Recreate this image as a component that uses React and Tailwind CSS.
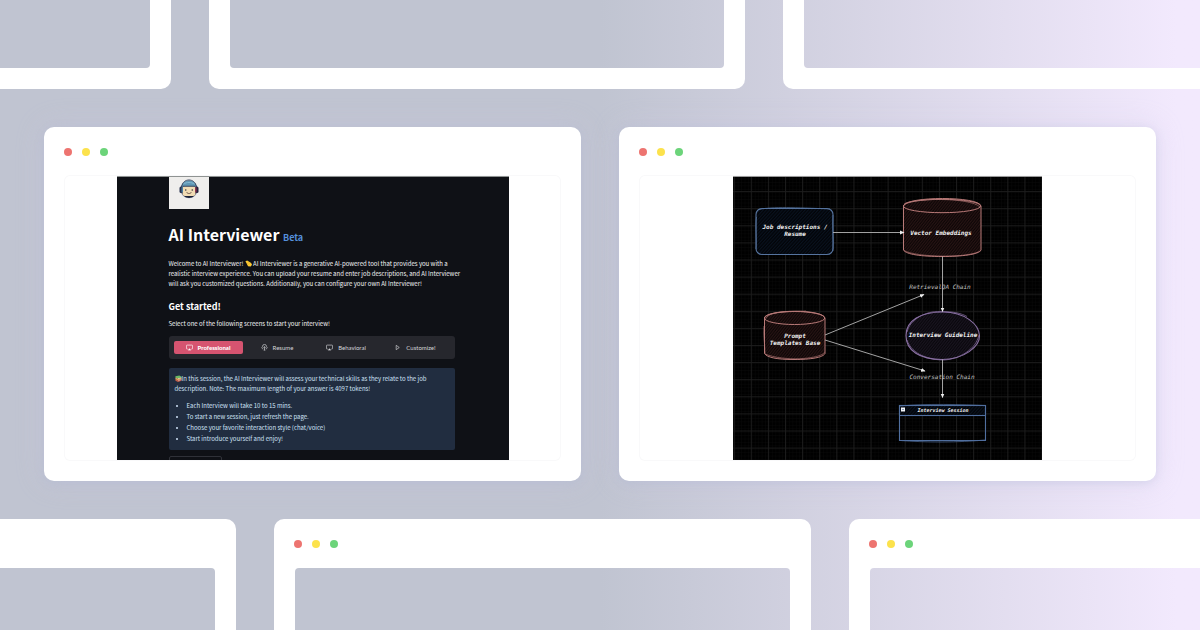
import React, { useState } from 'react'

const TABS = [
  { id: 'professional', label: 'Professional', icon: 'cast' },
  { id: 'resume', label: 'Resume', icon: 'cloud' },
  { id: 'behavioral', label: 'Behavioral', icon: 'cast' },
  { id: 'customize', label: 'Customize!', icon: 'play' },
]

const NOTES = [
  'Each Interview will take 10 to 15 mins.',
  'To start a new session, just refresh the page.',
  'Choose your favorite interaction style (chat/voice)',
  'Start introduce yourself and enjoy!',
]

function Dots() {
  return (
    <div className="relative z-10 flex h-[49px] items-center gap-2.5 pl-5">
      <span className="h-2 w-2 rounded-full bg-[#ed7470]" />
      <span className="h-2 w-2 rounded-full bg-[#fce24c]" />
      <span className="h-2 w-2 rounded-full bg-[#6cd47a]" />
    </div>
  )
}

// Empty frame: the pane's spread shadow paints the white chrome around it
function GhostWindow() {
  return (
    <div className="min-w-0 flex-1 overflow-hidden rounded-[10px]">
      <Dots />
      <div className="px-[21px] pb-[21px]">
        <div className="h-[284px] rounded-[4px] shadow-[0_0_0_64px_#fff]" />
      </div>
    </div>
  )
}

function Window({ children }) {
  return (
    <div className="min-w-0 flex-1 rounded-[10px] bg-white shadow-[0_2px_10px_rgba(165,178,208,0.3),0_0_28px_rgba(205,200,232,0.3)]">
      <Dots />
      <div className="px-[21px] pb-[21px]">
        <div className="flex h-[284px] justify-center overflow-hidden rounded-[5px] ring-1 ring-[#f9f9fa]">
          {children}
        </div>
      </div>
    </div>
  )
}

function Robot() {
  return (
    <svg viewBox="0 0 40 40" className="h-5 w-5" aria-hidden="true">
      <ellipse cx="20" cy="21" rx="18" ry="18" fill="#c9cfdd" />
      <path d="M4 20a16 16 0 0 1 32 0v3a16 15 0 0 1-32 0z" fill="#1c2238" />
      <path d="M5 17C6 7 12 3 20 3s14 4 15 14z" fill="#5f97b5" />
      <path d="M5 16C7 6 13 2 20 2s13 4 15 14" fill="none" stroke="#3b4963" strokeWidth="2" />
      <path d="M9 10c6-4 16-4 22 0" fill="none" stroke="#86b7cf" strokeWidth="2" />
      <rect x="7" y="14" width="26" height="20" rx="5" fill="#f1dcb4" />
      <path d="M7 14.500h26" stroke="#344059" strokeWidth="2" />
      <circle cx="13.500" cy="22" r="1.500" fill="#2a2a38" />
      <circle cx="26.500" cy="22" r="1.500" fill="#2a2a38" />
      <path d="M15 26c2 4 8 4 10 0" fill="none" stroke="#4d3a35" strokeWidth="1.500" />
      <rect x="1" y="15" width="6" height="13" rx="3" fill="#27314f" />
      <rect x="5" y="16" width="3" height="11" rx="1.500" fill="#4b7ea0" />
      <rect x="33" y="15" width="6" height="13" rx="3" fill="#27213c" />
      <rect x="32" y="16" width="3" height="11" rx="1.500" fill="#8d3450" />
    </svg>
  )
}

function Clap() {
  return (
    <svg viewBox="0 0 16 16" className="inline h-[7px] w-[7px] align-[-1px]" aria-hidden="true">
      <path d="M1 3l4-2 9 6 2 4-3 4-6-1z" fill="#ffcb32" />
      <path d="M4 6l5 5M7 4l5 5" stroke="#d99a22" strokeWidth="1" />
    </svg>
  )
}

function Books() {
  return (
    <svg viewBox="0 0 16 16" className="inline h-[7px] w-[7px] align-[-1px]" aria-hidden="true">
      <path d="M1 3l9-2 5 3v2l-8 2-6-2z" fill="#6cb865" />
      <path d="M1 6l6 2 8-2v4l-8 2-6-2z" fill="#e3a35c" />
      <path d="M1 10l6 2 8-2v3l-8 3-6-3z" fill="#c25d49" />
      <path d="M7 7.500l8-2v1L7 9zM7 12l8-2v1l-8 2z" fill="#efe9dc" />
    </svg>
  )
}

function TabIcon({ name }) {
  if (name === 'cloud') {
    return (
      <svg viewBox="0 0 16 16" className="h-[7px] w-[7px]" fill="none" stroke="currentColor" strokeWidth="1.500" aria-hidden="true">
        <path d="M5 11H4a3 3 0 0 1-.5-5.500a4.500 4.500 0 0 1 9 0A3 3 0 0 1 12 11h-1" />
        <path d="M8 14V6M5.500 8.500L8 6l2.500 2.500M6 14h4" />
      </svg>
    )
  }
  if (name === 'play') {
    return (
      <svg viewBox="0 0 16 16" className="h-[7px] w-[7px]" fill="none" stroke="currentColor" strokeWidth="1.500" strokeLinejoin="round" aria-hidden="true">
        <path d="M5 3l7 5-7 5z" />
      </svg>
    )
  }
  return (
    <svg viewBox="0 0 16 16" className="h-[7px] w-[7px]" fill="none" stroke="currentColor" strokeWidth="1.500" aria-hidden="true">
      <path d="M4 11.500H2.500A1.500 1.500 0 0 1 1 10V4a1.500 1.500 0 0 1 1.500-1.500h11A1.500 1.500 0 0 1 15 4v6a1.500 1.500 0 0 1-1.500 1.500H12" />
      <path d="M8 10l3.500 4h-7z" fill="currentColor" strokeWidth="0.500" />
    </svg>
  )
}

function InterviewerScreen() {
  const [tab, setTab] = useState('professional')

  return (
    <div className="w-[392px] overflow-hidden border-t border-[#8f9392] bg-[#0f1116] pr-[54px] pl-[52px] font-['Noto_Sans_CJK_SC',sans-serif] text-[6px] leading-[10px] font-normal text-[#f2f3f5]">
      <div className="flex h-8 w-10 justify-center bg-[#efeeec] pt-0.5">
        <Robot />
      </div>
      <h1 className="mt-[13px] h-6 text-[16px] leading-6 font-bold whitespace-nowrap text-white">
        AI Interviewer <span className="text-[9px] leading-3 text-[#5590dc]">Beta</span>
      </h1>
      <p className="mt-[13px] whitespace-nowrap">
        Welcome to AI Interviewer! <Clap /> AI Interviewer is a generative AI-powered tool that provides you with a
        <br />
        realistic interview experience. You can upload your resume and enter job descriptions, and AI Interviewer
        <br />
        will ask you customized questions. Additionally, you can configure your own AI Interviewer!
      </p>
      <h2 className="mt-3 text-[9px] leading-3 font-bold text-white">Get started!</h2>
      <p className="mt-1.5">Select one of the following screens to start your interview!</p>

      <div className="mt-[7px] grid grid-cols-4 rounded-[3px] bg-[#26272d] p-[5px] font-['Lato',sans-serif]">
        {TABS.map((t) => (
          <button
            key={t.id}
            type="button"
            onClick={() => setTab(t.id)}
            className={`flex h-[13px] items-center justify-center gap-[5px] rounded-[2px] whitespace-nowrap ${
              tab === t.id ? 'bg-[#d65470] font-black text-white' : 'font-normal text-[#d5d6d9]'
            }`}
          >
            <TabIcon name={t.icon} />
            {t.label}
          </button>
        ))}
      </div>

      <div className="mt-[9px] rounded-[2px] bg-[#212d40] px-1.5 py-1.5 text-[#cfe2f6]">
        <p className="whitespace-nowrap">
          <Books />In this session, the AI Interviewer will assess your technical skills as they relate to the job
          <br />
          description. Note: The maximum length of your answer is 4097 tokens!
        </p>
        <ul className="mt-1.5 list-disc pl-3 leading-[11px]">
          {NOTES.map((note) => (
            <li key={note}>{note}</li>
          ))}
        </ul>
      </div>
      <button type="button" aria-label="More" className="mt-1.5 block h-4 w-[53px] rounded-[2px] border border-[#2f3138]" />
    </div>
  )
}

function Arrow({ d }) {
  return <path d={d} fill="none" stroke="#b4b4b4" strokeWidth="0.9" markerEnd="url(#head)" />
}

function DiagramScreen() {
  return (
    <div className="w-[309px] border-t border-[#9a9a9a] bg-black">
      <svg
        viewBox="-1 0 309 284"
        className="h-[284px] w-[309px] font-['DejaVu_Sans_Mono',monospace] text-[6px] font-bold italic"
        role="img"
        aria-label="Interview flow"
      >
        <defs>
          <pattern id="minor" width="3.420" height="3.420" patternUnits="userSpaceOnUse" x="0.300" y="-1.800">
            <path d="M0 0H3.420M0 0V3.420" stroke="#0b0b0b" strokeWidth="0.700" />
          </pattern>
          <pattern id="major" width="17.100" height="17.100" patternUnits="userSpaceOnUse" x="-0.300" y="-3">
            <path d="M0 .5H17.100M.5 0V17.100" stroke="#1d1d1d" strokeWidth="0.900" />
          </pattern>
          <pattern id="blueHatch" width="2.400" height="2.400" patternUnits="userSpaceOnUse" patternTransform="rotate(42)">
            <rect width="2.400" height="2.400" fill="#020408" />
            <path d="M.6 0V2.400" stroke="#0b1626" strokeWidth="0.800" />
          </pattern>
          <pattern id="redHatch" width="2.200" height="2.200" patternUnits="userSpaceOnUse" patternTransform="rotate(38)">
            <rect width="2.200" height="2.200" fill="#0d0606" />
            <path d="M.6 0V2.200" stroke="#301919" strokeWidth="0.800" />
          </pattern>
          <pattern id="purpleHatch" width="2.200" height="2.200" patternUnits="userSpaceOnUse" patternTransform="rotate(38)">
            <rect width="2.200" height="2.200" fill="#09070c" />
            <path d="M.6 0V2.200" stroke="#1f1826" strokeWidth="0.800" />
          </pattern>
          <marker id="head" markerUnits="userSpaceOnUse" markerWidth="5" markerHeight="5" refX="4" refY="2.500" orient="auto">
            <path d="M0 .5L4.500 2.500L0 4.500z" fill="#eee" />
          </marker>
        </defs>
        <rect x="-1" width="310" height="284" fill="url(#minor)" />
        <rect x="-1" width="310" height="284" fill="url(#major)" />

        <g stroke="#56749f" strokeWidth="1.100" fill="none">
          <rect x="22" y="31.500" width="77" height="46" rx="6" fill="url(#blueHatch)" />
          <path d="M24 32.500C40 29.500 60 30.500 96 32M22.500 40C21 50 23 64 22 72M99 38C98 50 100 62 99 74" strokeWidth="0.700" />
        </g>

        <g stroke="#b97a78" strokeWidth="1" fill="none">
          <path d="M169.500 29V73C172 77.500 188 79.500 208 79.500S245 77.500 247 73V29C245 19 172 19 169.500 29z" fill="url(#redHatch)" />
          <ellipse cx="208" cy="29" rx="38.700" ry="6.700" />
          <path d="M170 27C178 21 236 20 246 30M170 73.500C182 80.500 236 81.500 247 73.500" strokeWidth="0.600" />
          <path d="M30.500 141V176.500C33 180.500 43 182.500 60 182.500S89 180.500 91 176.500V141C89 132 33 132 30.500 141z" fill="url(#redHatch)" />
          <ellipse cx="60.500" cy="141" rx="30.200" ry="6.500" />
          <path d="M31 143C34 133 58 135 72 134M30 149C29 159 31 167 31 177C50 184.500 84 182.500 91 175.500" strokeWidth="0.600" />
        </g>

        <g stroke="#8a70a4" strokeWidth="1.100" fill="none">
          <path d="M172 158.500C172 143 187 135 209 135S245 147.500 245.500 158.500S230 182.500 208 182.500S172 174 172 158.500z" fill="url(#purpleHatch)" />
          <path d="M173 155C176 142 192 134 206 134.500C220 134.500 228 136.500 233 139.500M173 163C178 178 196 183 210 183C226 182 242 172 245 158" strokeWidth="0.700" />
        </g>

        <g stroke="#506f9f" strokeWidth="1.100" fill="none">
          <rect x="165.500" y="228.500" width="86" height="10" fill="url(#blueHatch)" />
          <path d="M165.500 228.500H251.500V263.500H165.500z" />
          <path d="M166 229C190 226.500 230 227.500 251 228.500M166 263.500C190 265.500 226 265.500 251 263" strokeWidth="0.700" />
        </g>
        <rect x="167" y="230.500" width="4" height="4" fill="#f2f4f8" />
        <path d="M168 232.500h2" stroke="#55709c" strokeWidth="0.600" />

        <g fill="#f1f1f1" textAnchor="middle">
          <text x="61" y="52">Job descriptions /</text>
          <text x="61" y="59">Resume</text>
          <text x="207" y="58">Vector Embeddings</text>
          <text x="61" y="161">Prompt</text>
          <text x="61" y="168">Templates Base</text>
          <text x="209" y="160">Interview Guideline</text>
          <text x="209" y="235" className="text-[5px]">Interview Session</text>
        </g>
        <g fill="#c4c4c4" textAnchor="middle" className="font-normal">
          <text x="206" y="112">RetrievalQA Chain</text>
          <text x="208" y="202">Conversation Chain</text>
        </g>

        <Arrow d="M99 55.500H170" />
        <Arrow d="M208.500 79.500V134.500" />
        <Arrow d="M208.500 182.500V220.500" />
        <Arrow d="M91 158L190 117.500" />
        <Arrow d="M91 163L191 194" />
      </svg>
    </div>
  )
}

function App() {
  return (
    <div className="flex h-screen flex-col gap-[38px] overflow-hidden bg-linear-to-r from-[#c0c4d1] from-50% to-[#f2e9fd] to-98%">
      <div className="-mr-[120px] -ml-[366px] flex h-[89px] shrink-0 items-end gap-[38px]">
        <GhostWindow />
        <GhostWindow />
        <GhostWindow />
      </div>

      <main className="flex shrink-0 gap-[38px] px-11">
        <Window>
          <InterviewerScreen />
        </Window>
        <Window>
          <DiagramScreen />
        </Window>
      </main>

      <div className="-mr-[186px] -ml-[301px] flex min-h-0 flex-1 items-start gap-[38px]">
        <GhostWindow />
        <GhostWindow />
        <GhostWindow />
      </div>
    </div>
  )
}

export default App
